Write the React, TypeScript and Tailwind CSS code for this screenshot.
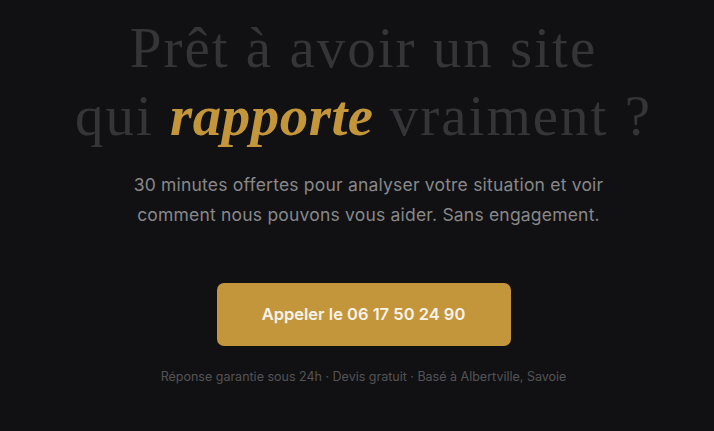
export default function App() {
  return (
    <section className="min-h-[431px] bg-[#111113] flex flex-col items-center pt-[14px] pl-[13px] text-center">
      <h2 className="font-['Liberation_Serif',serif] text-[57px] leading-[68px] text-[#353537] tracking-[2px]">
        Prêt à avoir un site
        <br />
        qui <em className="text-[#c4963c] font-semibold tracking-[0.5px]">rapporte</em> vraiment ?
      </h2>
      <p className="mt-[20px] pl-[10px] font-['Inter',sans-serif] text-[17.5px] leading-[30px] text-[#88888a] tracking-[0.2px] max-w-[530px]">
        30 minutes offertes pour analyser votre situation et voir
        <br />
        comment nous pouvons vous aider. Sans engagement.
      </p>
      <a
        href="#"
        className="mt-[53px] w-[294px] h-[63px] rounded-[7px] bg-[#c4963c] flex items-center justify-center font-['Inter',sans-serif] text-[16.5px] font-semibold text-[#f7f2ea]"
      >
        Appeler le 06 17 50 24 90
      </a>
      <p className="mt-[22px] font-['Inter',sans-serif] text-[12.5px] text-[#545456]">
        Réponse garantie sous 24h · Devis gratuit · Basé à Albertville, Savoie
      </p>
    </section>
  )
}
